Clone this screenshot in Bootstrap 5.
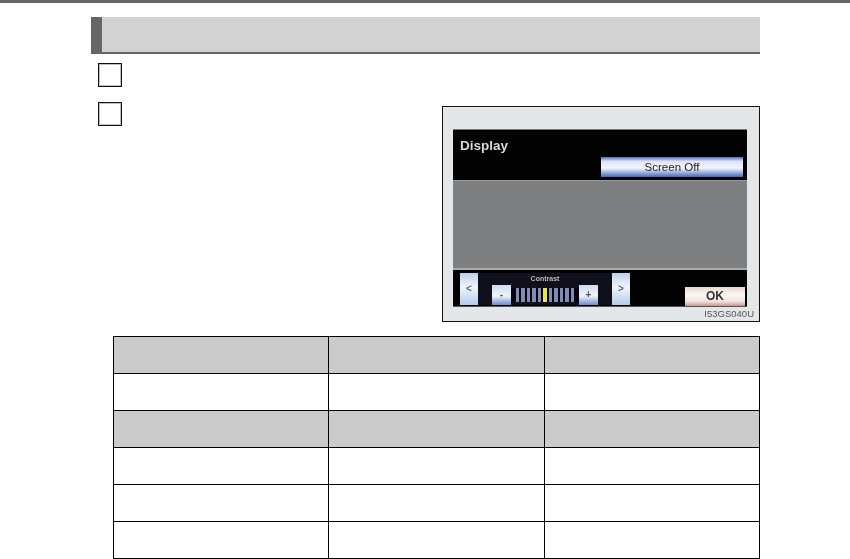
<!DOCTYPE html>
<html lang="en">
<head>
    <meta charset="UTF-8">
    <meta name="viewport" content="width=device-width, initial-scale=1.0">
    <title>Display</title>
    <link href="https://cdn.jsdelivr.net/npm/bootstrap@5.3.0/dist/css/bootstrap.min.css" rel="stylesheet">
    <style>
        body {
            background-color: #fff;
            font-family: "Liberation Sans", Arial, sans-serif;
            overflow: hidden;
        }
        .top-rule {
            height: 3px;
            background-color: #666;
        }
        .page-wrap {
            width: 669px;
            margin: 14px 0 0 91px;
        }
        .section-head {
            height: 37px;
            background-color: #d2d2d2;
            border-left: 11px solid #666;
            border-bottom: 2px solid #666;
        }
        .step-box {
            flex: none;
            width: 24px;
            height: 24px;
            margin-left: 7px;
            border: 1px solid #111;
            box-shadow: inset 0 0 0 1px rgba(0, 0, 0, .25);
        }
        .first-step { margin-top: 9px; }
        .step-row { margin-top: 15px; }
        .shot-frame {
            width: 318px;
            height: 216px;
            margin-top: 4px;
            background-color: #e4e7ea;
            border: 1px solid #111;
        }
        .shot-inner {
            height: 100%;
            padding: 22px 12px 0 10px;
            filter: blur(.7px);
        }
        .screen-top {
            height: 51px;
            background-color: #030203;
            border-top: 1px solid #777;
            padding: 7px 4px 0 7px;
        }
        .screen-title {
            color: #d8d8d8;
            font-size: 13.5px;
            font-weight: 700;
            line-height: 17px;
        }
        .screen-off {
            width: 142px;
            height: 20px;
            margin: 3px 0 0 auto;
            color: #222;
            font-size: 11.5px;
            line-height: 20px;
            text-align: center;
            background: linear-gradient(#4d6fc0, #dde4f6 22%, #f4f6fd 55%, #4a68b8);
        }
        .screen-body {
            height: 90px;
            background-color: #7e7f81;
            border-top: 1px solid #999;
            border-bottom: 2px solid #aaa;
        }
        .screen-foot {
            height: 37px;
            padding: 3px 2px 1px 7px;
            background-color: #030203;
            border-bottom: 1px solid #555;
        }
        .arrow-key {
            flex: none;
            width: 18px;
            height: 32px;
            color: #667;
            font-size: 10px;
            font-weight: 700;
            line-height: 32px;
            text-align: center;
            background: linear-gradient(#bcd0ec, #f1f5fc 45%, #b4cbec);
        }
        .contrast-panel {
            width: 134px;
            height: 32px;
            padding: 0 14px;
            background-color: #10101c;
        }
        .contrast-label {
            color: #bbb;
            font-size: 7px;
            font-weight: 700;
            line-height: 12px;
            text-align: center;
        }
        .step-key {
            flex: none;
            width: 19px;
            height: 20px;
            color: #556;
            font-size: 10px;
            font-weight: 700;
            line-height: 20px;
            text-align: center;
            background: linear-gradient(#cfdcf2, #eef3fb 55%, #6d8ccb);
        }
        .meter {
            height: 14px;
            gap: 2px;
            margin-top: 3px;
            padding: 0 5px;
            background-color: #05050a;
        }
        .meter i {
            flex: 1;
            background-color: #7d8db6;
        }
        .meter i.on { background-color: #ece44a; }
        .ok-key {
            flex: none;
            width: 60px;
            height: 19px;
            margin: 14px 0 0 55px;
            color: #333;
            font-size: 12px;
            font-weight: 700;
            line-height: 19px;
            text-align: center;
            background: linear-gradient(#e8d6d0, #fbf7f4 40%, #f3e4de 75%, #c79a90);
        }
        .shot-code {
            margin: 1px -7px 0 0;
            color: #555;
            font-size: 9.5px;
            line-height: 11px;
            text-align: right;
        }
        .spec-table {
            width: 647px;
            margin: 14px 0 0 22px;
            table-layout: fixed;
            border-color: #000;
        }
        .spec-table td {
            height: 37px;
            padding: 0;
            border-color: #000;
        }
        .spec-table .shade td {
            background-color: #cbcbcb;
        }
    </style>
</head>
<body>
    <div class="top-rule"></div>
    <div class="page-wrap">
        <div class="section-head"></div>
        <div class="step-box first-step"></div>
        <div class="d-flex justify-content-between align-items-start step-row">
            <div class="step-box"></div>
            <div class="shot-frame">
                <div class="shot-inner">
                    <div class="screen-top">
                        <div class="screen-title">Display</div>
                        <div class="screen-off">Screen Off</div>
                    </div>
                    <div class="screen-body"></div>
                    <div class="screen-foot d-flex align-items-start">
                        <div class="arrow-key">&lt;</div>
                        <div class="contrast-panel">
                            <div class="contrast-label">Contrast</div>
                            <div class="d-flex align-items-start">
                                <div class="step-key">-</div>
                                <div class="meter d-flex flex-grow-1">
                                    <i></i><i></i><i></i><i></i><i></i><i class="on"></i><i></i><i></i><i></i><i></i><i></i>
                                </div>
                                <div class="step-key">+</div>
                            </div>
                        </div>
                        <div class="arrow-key">&gt;</div>
                        <div class="ok-key">OK</div>
                    </div>
                    <div class="shot-code">I53GS040U</div>
                </div>
            </div>
        </div>
        <table class="table table-bordered spec-table">
            <tbody>
                <tr class="shade"><td></td><td></td><td></td></tr>
                <tr><td></td><td></td><td></td></tr>
                <tr class="shade"><td></td><td></td><td></td></tr>
                <tr><td></td><td></td><td></td></tr>
                <tr><td></td><td></td><td></td></tr>
                <tr><td></td><td></td><td></td></tr>
            </tbody>
        </table>
    </div>
    <script src="https://cdn.jsdelivr.net/npm/bootstrap@5.3.0/dist/js/bootstrap.bundle.min.js"></script>
</body>
</html>
